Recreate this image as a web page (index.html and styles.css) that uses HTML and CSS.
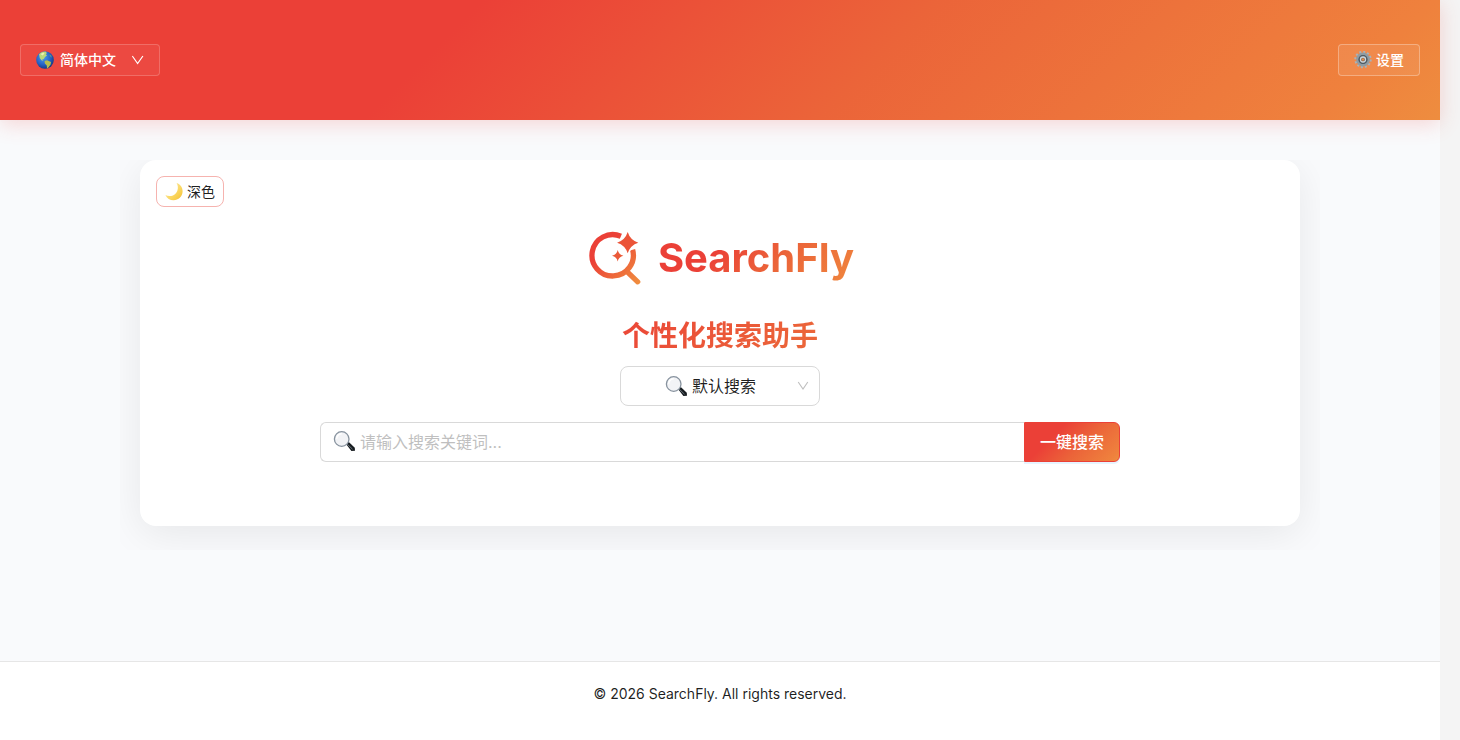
FILE: index.html
```
<!DOCTYPE html>
<html lang="zh-CN">
<head>
  <meta charset="UTF-8">
  <meta name="viewport" content="width=device-width, initial-scale=1">
  <title>SearchFly</title>
  <link rel="stylesheet" href="styles.css">
</head>
<body>
  <div class="layout">
    <header class="header">
      <div class="lang">
        <svg class="emoji" viewBox="0 0 18 18" aria-hidden="true">
          <defs>
            <radialGradient id="sea" cx=".4" cy=".35" r=".7">
              <stop offset="0" stop-color="#4b9df0"/>
              <stop offset=".6" stop-color="#2460c4"/>
              <stop offset="1" stop-color="#143478"/>
            </radialGradient>
          </defs>
          <circle cx="9" cy="9" r="8.8" fill="url(#sea)"/>
          <path d="M3 3.2C5 1.2 7.500.5 9.500.6L11 2 9.800 3.200 11 4.500 9 6 7.600 8.200 6.200 8 7.200 9.800 5.500 9.200 3.800 7 3.400 5z" fill="#b9d77b"/>
          <path d="M4.500 3l3-1.600 1 1.400-2 1.700z" fill="#ecefb4"/>
          <path d="M8.600 10l2.400-.8 4 1.800-.4 2.400-2.200 3.200-1.400.8-.2-3-2-2z" fill="#b5bd4e"/>
          <path d="M13 3.500l2 .7 1 2.300-1.300-.4z" fill="#5d9a86"/>
        </svg>
        <select class="lang-select" aria-label="语言">
          <option>简体中文</option>
          <option>English</option>
        </select>
        <svg class="arrow" viewBox="0 0 12 12" aria-hidden="true"><path d="M.3 2l5.300 7.500L10.900 2" fill="none" stroke="currentColor" stroke-width="1.200"/></svg>
      </div>
      <button class="settings" type="button">
        <svg class="emoji" viewBox="0 0 18 18" aria-hidden="true">
          <circle cx="9" cy="8.500" r="7.600" fill="none" stroke="#aab3b8" stroke-width="2.200" stroke-dasharray="2 1.980"/>
          <circle cx="9" cy="8.500" r="5.600" fill="#56636c" stroke="#8f9ba2" stroke-width="2.600"/>
          <circle cx="9" cy="8.500" r="4" fill="none" stroke="#4d5a64" stroke-width="1.200"/>
          <circle cx="9" cy="8.500" r="2.500" fill="#6b5a50" stroke="#cfd6da" stroke-width="1.300"/>
          <circle cx="9" cy="8.500" r="1.200" fill="#e48b46"/>
        </svg>
        设置
      </button>
    </header>

    <main class="main">
      <div class="container">
        <section class="card">
          <button class="theme" type="button">
            <svg class="emoji" viewBox="0 0 18 18" aria-hidden="true">
              <defs>
                <linearGradient id="moon" x1="0" y1="0" x2="1" y2="1">
                  <stop offset=".3" stop-color="#fbe48a"/>
                  <stop offset=".75" stop-color="#f9cf4d"/>
                  <stop offset="1" stop-color="#eeb33a"/>
                </linearGradient>
              </defs>
              <path d="M11.600 0C15.400 1.200 17.800 4.600 17.600 8.600c-.2 5-4.200 8.700-9 8.700C5 17.300 1.800 15.300.4 12c2 1.200 5 1.500 7.600.4C12.800 10.200 14.200 4.600 11.600 0z" fill="url(#moon)"/>
            </svg>
            深色
          </button>

          <div class="search">
            <div class="logo">
              <svg class="logo-icon" viewBox="0 0 56 54" aria-hidden="true">
                <defs>
                  <linearGradient id="brand" x1="6" y1="8" x2="52" y2="52" gradientUnits="userSpaceOnUse">
                    <stop offset=".25" stop-color="#eb4037"/>
                    <stop offset="1" stop-color="#f08c3e"/>
                  </linearGradient>
                </defs>
                <path d="M34.900 5.300A20.700 20.700 0 1 0 46.600 18.700" fill="none" stroke="url(#brand)" stroke-width="5.300"/>
                <path d="M40.500 40.200L51.700 50.800" fill="none" stroke="url(#brand)" stroke-width="5.300" stroke-linecap="round"/>
                <!-- sparkles, the big one has a white rim that cuts the ring -->
                <path d="M41.700 1.100Q44.200 9.200 52.300 11.700 44.200 14.200 41.700 22.300 39.200 14.200 31.100 11.700 39.200 9.200 41.700 1.100z" fill="#fff" stroke="#fff" stroke-width="3"/>
                <path d="M41.700 1.100Q44.200 9.200 52.300 11.700 44.200 14.200 41.700 22.300 39.200 14.200 31.100 11.700 39.200 9.200 41.700 1.100z" fill="#eb5438"/>
                <path d="M31.700 19Q32.700 23.700 37.400 24.700 32.700 25.700 31.700 30.400 30.700 25.700 26 24.700 30.700 23.700 31.700 19z" fill="#eb5a39"/>
              </svg>
              <h1 class="logo-text">SearchFly</h1>
            </div>
            <h2 class="slogan">个性化搜索助手</h2>
            <div class="engine">
              <svg class="glass" viewBox="0 0 22 22" aria-hidden="true">
                <path d="M13 14l2.500-2.200 6.300 6 .2 3-3.600.1z" fill="#171c20"/>
                <path d="M14.300 14.200l5.200 5" stroke="#6d7981" stroke-width="1"/>
                <circle cx="8.700" cy="9" r="7.300" fill="#f2f3f6" stroke="#87929e" stroke-width="1.300"/>
                <path d="M3.700 8.700a5 5 0 0 1 5-5" fill="none" stroke="#fff" stroke-width="1.500"/>
              </svg>
              <select class="engine-select" aria-label="搜索引擎">
                <option>默认搜索</option>
              </select>
              <svg class="arrow" viewBox="0 0 12 12" aria-hidden="true"><path d="M1.200 2l4.800 7L10.800 2" fill="none" stroke="currentColor" stroke-width="1.100"/></svg>
            </div>
            <form class="search-bar">
              <label class="field">
                <svg class="glass" viewBox="0 0 22 22" aria-hidden="true">
                  <path d="M13 13l2.500-2.200 6.300 6 .2 3-3.600.1z" fill="#171c20"/>
                  <path d="M14.300 13.200l5.200 5" stroke="#6d7981" stroke-width="1"/>
                  <circle cx="8.700" cy="8" r="7.300" fill="#f2f3f6" stroke="#87929e" stroke-width="1.300"/>
                  <path d="M3.700 7.700a5 5 0 0 1 5-5" fill="none" stroke="#fff" stroke-width="1.500"/>
                </svg>
                <input class="keyword" type="text" placeholder="请输入搜索关键词..." aria-label="搜索关键词">
              </label>
              <button class="submit" type="button">一键搜索</button>
            </form>
          </div>
        </section>
      </div>
    </main>

    <footer class="footer">© 2026 SearchFly. All rights reserved.</footer>
  </div>
</body>
</html>
```
FILE: styles.css
```
:root {
  --red: #eb4037;
  --brand: linear-gradient(135deg, #eb4037 0%, #eb4037 31%, #eb6439 60%, #ef813d 92%, #ee8d3f 100%);
}
* {
  box-sizing: border-box;
}
body {
  margin: 0;
  padding-right: 20px;
  background: #f4f4f4;
  color: rgba(0, 0, 0, 0.88);
  font-family: Inter, "Noto Sans CJK SC", sans-serif;
  font-size: 14px;
  line-height: 22px;
}
button, select, input {
  font: inherit;
  color: inherit;
}
button, select {
  cursor: pointer;
}
select {
  appearance: none;
  border: 0;
  padding: 0;
  background: transparent;
}
svg {
  display: block;
  flex: none;
}
.layout {
  display: flex;
  flex-direction: column;
  min-height: 100vh;
  background: #f9fafc;
}
.emoji {
  width: 18px;
  height: 18px;
}
.glass {
  width: 22px;
  height: 22px;
}
.arrow {
  width: 12px;
  height: 12px;
}

/* header */
.header {
  position: relative;
  display: flex;
  align-items: center;
  justify-content: space-between;
  height: 120px;
  padding: 0 20px;
  background: var(--brand);
  box-shadow: 0 4px 20px rgba(235, 64, 55, 0.2);
}
.lang, .settings {
  display: flex;
  align-items: center;
  height: 32px;
  padding: 0 15px;
  border: 1px solid rgba(255, 255, 255, 0.2);
  border-radius: 4px;
  background: rgba(255, 255, 255, 0.05);
  color: #fff;
  font-weight: 500;
}
.lang {
  width: 140px;
  gap: 6px;
}
.lang-select {
  flex: 1;
  min-width: 0;
}
.lang-select option {
  color: #222;
}
.settings {
  gap: 4px;
  background: rgba(255, 255, 255, 0.08);
  border-color: rgba(255, 255, 255, 0.3);
}

/* card */
.main {
  flex: 1;
  padding-top: 40px;
}
.container {
  max-width: 1200px;
  margin: 0 auto;
  padding: 0 20px 24px;
  overflow: hidden;
}
.card {
  padding: 16px 16px 64px;
  border-radius: 16px;
  background: #fff;
  box-shadow: 0 8px 40px rgba(0, 0, 0, 0.08);
}
.theme {
  display: flex;
  align-items: center;
  gap: 4px;
  height: 31px;
  padding: 0 8px;
  border: 1px solid #f6b3af;
  border-radius: 8px;
  background: #fff;
}
.search {
  display: flex;
  flex-direction: column;
  align-items: center;
  max-width: 800px;
  margin: 23px auto 0;
}
.logo {
  display: flex;
  align-items: center;
  gap: 16px;
}
.logo-icon {
  width: 56px;
  height: 54px;
}
.logo-text, .slogan {
  margin: 0;
  background: var(--brand);
  background-clip: text;
  -webkit-background-clip: text;
  color: transparent;
}
.logo-text {
  font-size: 40px;
  font-weight: 700;
  line-height: 56px;
}
.slogan {
  width: 100%;
  margin-top: 30px;
  font-size: 28px;
  font-weight: 600;
  line-height: 40px;
  text-align: center;
}
.engine {
  display: flex;
  align-items: center;
  gap: 5px;
  width: 200px;
  height: 40px;
  margin-top: 10px;
  padding: 0 10px 0 44px;
  border: 1px solid #d9d9d9;
  border-radius: 8px;
  font-size: 16px;
}
.engine-select {
  flex: 1;
  min-width: 0;
}
.engine .arrow {
  color: #bfbfbf;
}
.search-bar {
  display: flex;
  width: 100%;
  height: 40px;
  margin-top: 16px;
  font-size: 16px;
}
.field {
  display: flex;
  flex: 1;
  align-items: center;
  gap: 5px;
  padding: 0 12px;
  border: 1px solid #d9d9d9;
  border-right: 0;
  border-radius: 6px 0 0 6px;
}
.keyword {
  flex: 1;
  min-width: 0;
  padding: 0;
  border: 0;
  outline: none;
  background: transparent;
}
.keyword::placeholder {
  color: #bfbfbf;
}
.submit {
  padding: 0 15px;
  border: 1px solid var(--red);
  border-radius: 0 6px 6px 0;
  background: var(--brand);
  box-shadow: 0 2px 0 rgba(5, 145, 255, 0.1);
  color: #fff;
  font-weight: 500;
}

/* footer */
.footer {
  height: 79px;
  padding-top: 21px;
  border-top: 1px solid #e6e6e6;
  background: #fff;
  text-align: center;
}
```
